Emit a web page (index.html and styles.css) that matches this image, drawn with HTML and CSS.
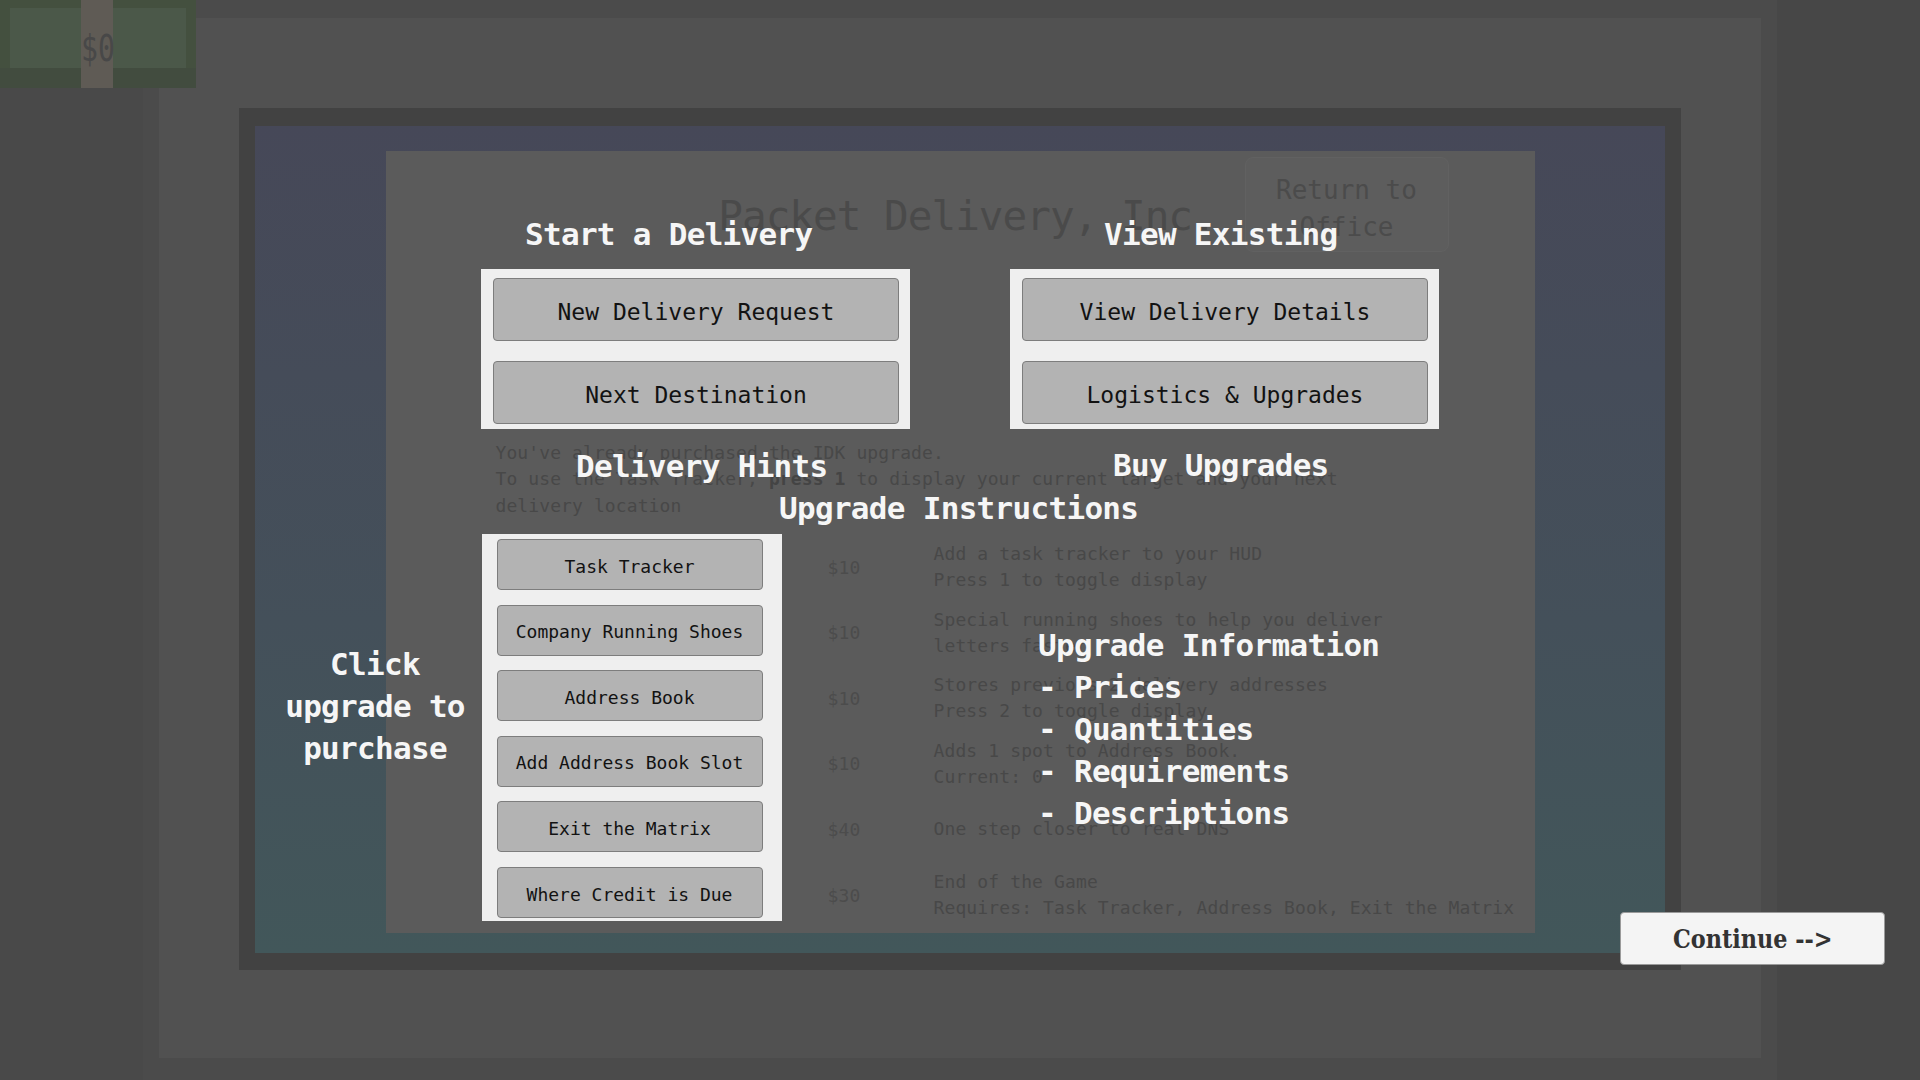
FILE: index.html
```html
<!DOCTYPE html>
<html lang="en">
<head>
<meta charset="utf-8">
<title>Packet Delivery, Inc.</title>
<link rel="stylesheet" href="styles.css">
</head>
<body>
<div class="screen">
  <div class="gutter-left"></div>
  <div class="column">
    <div class="stage">
      <div class="frame">
        <div class="sky">
          <div class="office">
            <header class="office-head">
              <div class="head-spacer"></div>
              <h1 class="title">Packet Delivery, Inc.</h1>
              <button class="return-btn">Return to<br>Office</button>
            </header>
            <div class="actions">
              <div class="hl hl-actions">
                <button class="btn btn-lg">New Delivery Request</button>
                <button class="btn btn-lg">Next Destination</button>
              </div>
              <div class="hl hl-actions">
                <button class="btn btn-lg">View Delivery Details</button>
                <button class="btn btn-lg">Logistics &amp; Upgrades</button>
              </div>
            </div>
            <p class="hint">You've already purchased the IDK upgrade.<br>To use the Task Tracker, <b>press 1</b> to display your current target and your next delivery location</p>
            <div class="upgrades">
              <div class="hl hl-upg">
                <button class="btn btn-sm">Task Tracker</button>
                <button class="btn btn-sm">Company Running Shoes</button>
                <button class="btn btn-sm">Address Book</button>
                <button class="btn btn-sm">Add Address Book Slot</button>
                <button class="btn btn-sm">Exit the Matrix</button>
                <button class="btn btn-sm">Where Credit is Due</button>
              </div>
              <div class="upg-info">
                <div class="upg-row"><span class="price">$10</span><span class="desc">Add a task tracker to your HUD<br>Press 1 to toggle display</span></div>
                <div class="upg-row"><span class="price">$10</span><span class="desc">Special running shoes to help you deliver<br>letters faster</span></div>
                <div class="upg-row"><span class="price">$10</span><span class="desc">Stores previous 2 delivery addresses<br>Press 2 to toggle display</span></div>
                <div class="upg-row"><span class="price">$10</span><span class="desc">Adds 1 spot to Address Book.<br>Current: 0</span></div>
                <div class="upg-row"><span class="price">$40</span><span class="desc">One step closer to real DNS</span></div>
                <div class="upg-row"><span class="price">$30</span><span class="desc">End of the Game<br>Requires: Task Tracker, Address Book, Exit the Matrix</span></div>
              </div>
            </div>
          </div>
        </div>
      </div>
    </div>
  </div>
  <div class="gutter-right"></div>
</div>

<div class="money"><span class="money-text">$0</span></div>

<div class="tutorial">
  <div class="tip tip-start">Start a Delivery</div>
  <div class="tip tip-view">View Existing</div>
  <div class="tip tip-hints">Delivery Hints</div>
  <div class="tip tip-buy">Buy Upgrades</div>
  <div class="tip tip-instr">Upgrade Instructions</div>
  <div class="tip tip-info">Upgrade Information
- Prices
- Quantities
- Requirements
- Descriptions</div>
  <div class="tip tip-click">Click
upgrade to
purchase</div>
</div>

<button class="continue"><span class="continue-text">Continue --&gt;</span></button>
</body>
</html>
```

FILE: styles.css
```css
* { box-sizing: border-box; }

html, body {
  margin: 0;
  padding: 0;
  width: 1920px;
  height: 1080px;
  overflow: hidden;
  background: #484848;
  font-family: "DejaVu Sans Mono", monospace;
}

.screen {
  display: flex;
  width: 1920px;
  height: 1080px;
}

.gutter-left { width: 143px; background: #494949; }
.gutter-right { flex: 1; background: #474747; }

.column {
  width: 1634px;
  background: #4b4b4b;
  padding: 18px 16px 22px 16px;
}

.stage {
  height: 1040px;
  background: #515151;
  display: flex;
  justify-content: center;
  align-items: flex-start;
  padding-top: 90px;
}

.frame {
  width: 1442px;
  height: 862px;
  background: #424242;
  padding: 18px 16px 17px 16px;
}

.sky {
  height: 100%;
  background: linear-gradient(to bottom, #464858 0%, #44505a 60%, #42575a 100%);
  display: flex;
  justify-content: center;
  align-items: flex-start;
  padding-top: 25px;
}

.office {
  width: 1149px;
  height: 782px;
  background: #5b5b5b;
  display: flex;
  flex-direction: column;
}

.office-head {
  display: grid;
  grid-template-columns: 1fr auto 1fr;
  align-items: start;
  padding-top: 6px;
}

.title {
  margin: 34px 0 0 14px;
  font-family: "DejaVu Sans Mono", monospace;
  font-weight: normal;
  font-size: 41px;
  letter-spacing: -1px;
  line-height: 50px;
  color: #4a4a4a;
  white-space: nowrap;
}

.return-btn {
  justify-self: end;
  margin-right: 86px;
  width: 204px;
  height: 95px;
  padding: 9px 0 0 0;
  background: #5d5d5d;
  border: 1px solid #616161;
  border-radius: 8px;
  font-family: "DejaVu Sans Mono", monospace;
  font-size: 26px;
  line-height: 37px;
  color: #4b4b4b;
}

.actions {
  display: flex;
  justify-content: center;
  gap: 100px;
  margin-top: 17px;
}

.hl { background: #efefef; }

.hl-actions {
  width: 429px;
  padding: 9px 11px 5px 12px;
  display: flex;
  flex-direction: column;
  gap: 20px;
}

.btn {
  display: block;
  margin: 0;
  background: #b3b3b3;
  border: 1px solid #7d7d7d;
  border-radius: 4px;
  font-family: "DejaVu Sans Mono", monospace;
  color: #121212;
  text-align: center;
  white-space: nowrap;
}

.btn-lg {
  width: 406px;
  height: 63px;
  padding: 4px 0 0 0;
  font-size: 23px;
}

.btn-sm {
  width: 266px;
  height: 51px;
  padding: 3px 0 0 0;
  font-size: 18px;
}

.hint {
  margin: 10.6px 0 0 110px;
  width: 900px;
  font-size: 18px;
  letter-spacing: 0.1px;
  line-height: 26.5px;
  color: #484848;
}

.hint b { font-weight: bold; color: #444444; }

.upgrades {
  display: flex;
  margin-top: 15px;
  padding-left: 96px;
}

.hl-upg {
  width: 300px;
  padding: 5px 19px 3px 15px;
  display: flex;
  flex-direction: column;
  gap: 14.6px;
}

.upg-info {
  margin-left: 46px;
  padding-top: 5px;
  display: flex;
  flex-direction: column;
  gap: 14.6px;
}

.upg-row {
  height: 51px;
  display: flex;
  align-items: center;
  font-size: 18px;
  letter-spacing: 0.12px;
  white-space: nowrap;
}

.price {
  width: 106px;
  color: #4c4c4c;
  padding-top: 5px;
}

.desc {
  line-height: 26px;
  color: #484848;
  padding-top: 5px;
}

/* HUD money */
.money {
  position: absolute;
  left: 0;
  top: 0;
  width: 196px;
  height: 88px;
  background:
    linear-gradient(#5f5b55, #5f5b55) 81px 0 / 32px 88px no-repeat,
    linear-gradient(#4b5849, #4b5849) 10px 8px / 176px 60px no-repeat,
    linear-gradient(#424c3f, #424c3f) 0 68px / 196px 20px no-repeat,
    #44503f;
  display: flex;
  justify-content: center;
  padding-top: 26px;
}

.money-text {
  display: inline-block;
  font-family: "DejaVu Sans Mono", monospace;
  font-size: 38px;
  line-height: 44px;
  height: 44px;
  color: #484848;
  transform: scaleX(0.74);
}

/* Tutorial overlay */
.tutorial {
  position: absolute;
  left: 0;
  top: 0;
  width: 1920px;
  height: 1080px;
  pointer-events: none;
}

.tip {
  position: absolute;
  font-family: "DejaVu Sans Mono", monospace;
  font-weight: bold;
  font-size: 31px;
  letter-spacing: -0.7px;
  line-height: 42px;
  color: #f6f6f6;
  white-space: pre;
}

.tip-start { left: 525px; top: 213px; }
.tip-view { left: 1104px; top: 213px; }
.tip-hints { left: 576px; top: 445px; }
.tip-buy { left: 1113px; top: 444px; }
.tip-instr { left: 779px; top: 487px; }
.tip-info { left: 1038px; top: 624px; }
.tip-click { left: 225px; top: 643px; width: 300px; text-align: center; }

/* Continue */
.continue {
  position: absolute;
  left: 1620px;
  top: 912px;
  width: 265px;
  height: 53px;
  margin: 0;
  padding: 0;
  background: #f4f4f4;
  border: 1px solid #9a9a9a;
  border-radius: 4px;
  display: flex;
  align-items: center;
  justify-content: center;
}

.continue-text {
  display: inline-block;
  font-family: "DejaVu Serif", "Liberation Serif", serif;
  font-weight: bold;
  font-size: 26px;
  line-height: 30px;
  color: #333333;
  transform: scaleX(0.86);
  white-space: nowrap;
}
```
